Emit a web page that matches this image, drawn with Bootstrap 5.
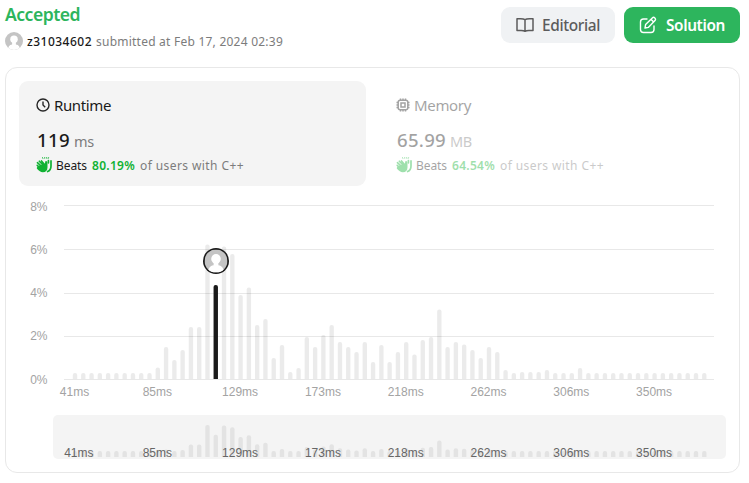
<!DOCTYPE html>
<html lang="en">
<head>
<meta charset="utf-8">
<meta name="viewport" content="width=device-width, initial-scale=1">
<title>Accepted</title>
<link href="https://cdn.jsdelivr.net/npm/bootstrap@5.3.0/dist/css/bootstrap.min.css" rel="stylesheet">
<style>
body{font-family:"Noto Sans","Open Sans",sans-serif;font-size:12px;line-height:16px;color:#1a1a1a;background:#fff;overflow:hidden}
svg{display:block;flex:none}
.page{padding:5px 9px 0 5px}
.status{font-size:17.6px;line-height:20px;margin-top:-1px;font-weight:600;color:#2db55d}
.dim{color:#7c7c7c}
.byline{height:18px;margin-top:8px}
.byline span{padding-top:1px}
.user{margin-left:4px;font-weight:500}
.when{margin-left:4px}
.actions{gap:9px}
.action{height:36px;margin-top:2px;border-radius:9px;font-size:15.4px;font-weight:500;line-height:20px;padding:0 15px;border:0}
.action span{padding-top:2px;margin-left:8px}
.action-light{background:#f0f2f4;color:#5c5c5c;width:114px}
.action-green,.action-green:hover{background:#2db55d;color:#fff;width:116px;font-weight:600}
.action-green span{margin-left:9px}
.panel{border:1px solid #e8e8e8;border-radius:12px;height:406px;margin-top:17px;padding:13px 13px 0}
.stat{width:347px;height:105px;border-radius:9px;padding:14px 17px 0}
.stat-on{background:#f4f4f4}
.stat-off{opacity:.4;padding-left:30px}
.stat-name{font-size:15px;line-height:20px}
.stat-name span{margin-left:4px}
.value-row{margin-top:14px;height:22px}
.stat-value{font-size:18.6px;line-height:22px;font-weight:500;margin-left:1px}
.stat-unit{font-size:14.5px;margin-left:4px}
.beat-row{margin-top:5px;height:18px}
.beat-row span{padding-top:1px}
.beats{margin-left:4px}
.pct{color:#10b233;font-weight:600;margin:0 5px}
.overview{width:673px;height:44px;border-radius:5px;background:#f4f4f4;margin:10px 0 0 34px;overflow:hidden}
svg text{font-family:"Liberation Sans",Arial,sans-serif;font-size:12px}
[data-w]{white-space:nowrap}
</style>
<script src="https://cdn.jsdelivr.net/npm/bootstrap@5.3.0/dist/js/bootstrap.bundle.min.js"></script>
</head>
<body>
<svg width="0" height="0" class="position-absolute" aria-hidden="true">
  <defs>
    <symbol id="person" viewBox="0 0 24 24"><clipPath id="disc"><circle cx="12" cy="12" r="12"/></clipPath><g clip-path="url(#disc)"><rect width="24" height="24" fill="#c4c4c4"/><circle cx="12" cy="9.8" r="5" fill="#fff"/><path d="M9.5 13h5v3.500c4 .6 5.500 3.200 5.500 7.500H4c0-4.300 1.500-6.900 5.500-7.500z" fill="#fff"/></g></symbol>
    <symbol id="clap" viewBox="0 0 16 16">
      <g fill="none" stroke="#10b233" stroke-linecap="round"><path d="M1.200 8.300l4 3.700M1.400 5.700l4.600 4.200M3.300 4.200l4.200 4.200M5.500 3.900l3 3.500" stroke-width="1.600"/><path d="M15 3.900v5c0 2.700-1.200 4.800-3.400 5.600M12.400 3.600v2.200" stroke-width="1.700"/><path d="M6.500.5l.4 1M8.700.3v1M10.700.3v1M12.600.5l-.4 1" stroke-width=".8"/></g>
      <path d="M2.600 9L8.200 6.500l.7 1c.2-1.600.2-3.400 1-3.400 1.400 0 1.600 1.100 1.600 2.800v3.300c0 3.200-1.700 5-4.700 5-2.200 0-3.600-1.300-5.800-3.400-.8-.8.600-2.200 1.600-2.800z" fill="#10b233"/>
    </symbol>
  </defs>
</svg>
<main class="page">
  <header class="d-flex justify-content-between align-items-start">
    <div>
      <div class="status" data-w="75">Accepted</div>
      <div class="byline d-flex align-items-center">
        <svg width="18" height="18"><use href="#person"/></svg>
        <span class="user" data-w="65">z31034602</span>
        <span class="dim when" data-w="187">submitted at Feb 17, 2024 02:39</span>
      </div>
    </div>
    <div class="d-flex actions">
      <button class="btn action action-light d-flex align-items-center">
        <svg width="18" height="18" viewBox="0 0 18 18" fill="none" stroke="currentColor" stroke-width="1.500"><path d="M9 3.600C7.900 2.900 6.400 2.700 4.600 2.700H1v11.700h4.200c1.500 0 2.800.2 3.800.9 1-.7 2.300-.9 3.800-.9H17V2.700h-3.600c-1.800 0-3.300.2-4.400.9zM9 3.600v11.700" stroke-linejoin="round"/></svg>
        <span data-w="58">Editorial</span>
      </button>
      <button class="btn action action-green d-flex align-items-center">
        <svg width="18" height="18" viewBox="0 0 18 18" fill="none" stroke="currentColor" stroke-width="1.400" stroke-linecap="round" stroke-linejoin="round"><path d="M8 3H4.500C2.500 3 1.500 4 1.500 6v7.500c0 2 1 3 3 3h7.500c2 0 3-1 3-3V10"/><path d="M6 12l.6-3.400 6.700-6.700c1.700-1.500 4.200.8 2.700 2.700l-6.700 6.800zM12 3.300l2.600 2.700"/></svg>
        <span data-w="59">Solution</span>
      </button>
    </div>
  </header>
  <section class="panel">
    <div class="d-flex">
      <div class="stat stat-on">
        <div class="d-flex align-items-center stat-name">
          <svg width="14" height="14" viewBox="0 0 14 14" fill="none" stroke="#262626" stroke-width="1.400"><circle cx="7" cy="7" r="6"/><path d="M7 3.500V7l2.200 2.200"/></svg>
          <span data-w="57">Runtime</span>
        </div>
        <div class="d-flex align-items-baseline value-row">
          <span class="stat-value" data-w="33">119</span><span class="dim stat-unit" data-w="20">ms</span>
        </div>
        <div class="d-flex align-items-center beat-row">
          <svg width="16" height="16"><use href="#clap"/></svg>
          <span class="beats" data-w="31">Beats</span><span class="pct" data-w="43">80.19%</span><span class="dim" data-w="104">of users with C++</span>
        </div>
      </div>
      <div class="stat stat-off">
        <div class="d-flex align-items-center stat-name">
          <svg width="14" height="14" viewBox="0 0 14 14" fill="none" stroke="#1a1a1a" stroke-width="1.500"><rect x="2.200" y="2.200" width="9.600" height="9.600" rx="2"/><rect x="5" y="5" width="4" height="4"/><path d="M4.500 2V.5M7 2V.5M9.500 2V.5M4.500 12v1.500M7 12v1.500M9.500 12v1.500M2 4.500H.5M2 7H.5M2 9.500H.5M12 4.500h1.500M12 7h1.500M12 9.500h1.500"/></svg>
          <span data-w="57">Memory</span>
        </div>
        <div class="d-flex align-items-baseline value-row">
          <span class="stat-value" data-w="49">65.99</span><span class="dim stat-unit" data-w="22">MB</span>
        </div>
        <div class="d-flex align-items-center beat-row">
          <svg width="16" height="16"><use href="#clap"/></svg>
          <span class="beats" data-w="31">Beats</span><span class="pct" data-w="43">64.54%</span><span class="dim" data-w="104">of users with C++</span>
        </div>
      </div>
    </div>
    <svg id="chart" width="707" height="219" viewBox="19 186 707 219"></svg>
    <div class="overview"><svg id="mini" width="673" height="44" viewBox="53 415 673 44"></svg></div>
  </section>
</main>
<script>
// Spread each label's letters over its design width.
document.querySelectorAll('[data-w]').forEach(function(el){
  var r=document.createRange();r.selectNodeContents(el);
  var extra=(+el.dataset.w-r.getBoundingClientRect().width)/el.textContent.length;
  el.style.letterSpacing=extra.toFixed(3)+'px';
});
// Bar heights in pixels, one per runtime bucket.
var bars=[6,6,6,6,6,6,6,6,6,6,11.500,32,19,29,52,52,134.500,94,132.500,125,84,91.500,54,60,21,34,7,11,42,32,44,54,37,32,27,37,17,34,17,27,37,24.500,39,42,69.500,32,37,34.500,29,21,32,27,9,6,7,7,7,9,6,6,6,11];
while(bars.length<77)bars.push(6);
var ticks=['41ms','85ms','129ms','173ms','218ms','262ms','306ms','350ms'];
function column(x,base,h,fill){
  return '<path d="M'+(x-2.200)+' '+base+'v'+(2-h)+'q0-2 2-2h.4q2 0 2 2v'+(h-2)+'z" fill="'+fill+'"/>';
}
var main='',mini='';
[[205,211],[249,254],[293,297],[336,340],[379,384]].forEach(function(row,i){
  main+='<rect x="64" y="'+row[0]+'" width="650" height="1" fill="#e8e8e8"/><text x="47.500" y="'+row[1]+'" text-anchor="end" fill="#a3a3a3">'+(8-i*2)+'%</text>';
});
bars.forEach(function(h,i){
  var x=75+i*8.280;
  main+=column(x,379,h,i==17?'#1a1a1a':'rgba(0,0,0,.08)');
  mini+=column(x,457,Math.max(6,h*.238),'#e3e3e3');
});
ticks.forEach(function(t,i){
  var x=74.500+i*82.800;
  main+='<text x="'+x+'" y="396" text-anchor="middle" fill="#a3a3a3">'+t+'</text>';
  mini+='<text x="'+(i?x:78.800)+'" y="457" text-anchor="middle" fill="#666">'+t+'</text>';
});
main+='<circle cx="216" cy="261" r="13" fill="#1a1a1a"/><use href="#person" x="204.500" y="249.500" width="23" height="23"/>';
document.getElementById('chart').innerHTML=main;
document.getElementById('mini').innerHTML=mini;
</script>
</body>
</html>
